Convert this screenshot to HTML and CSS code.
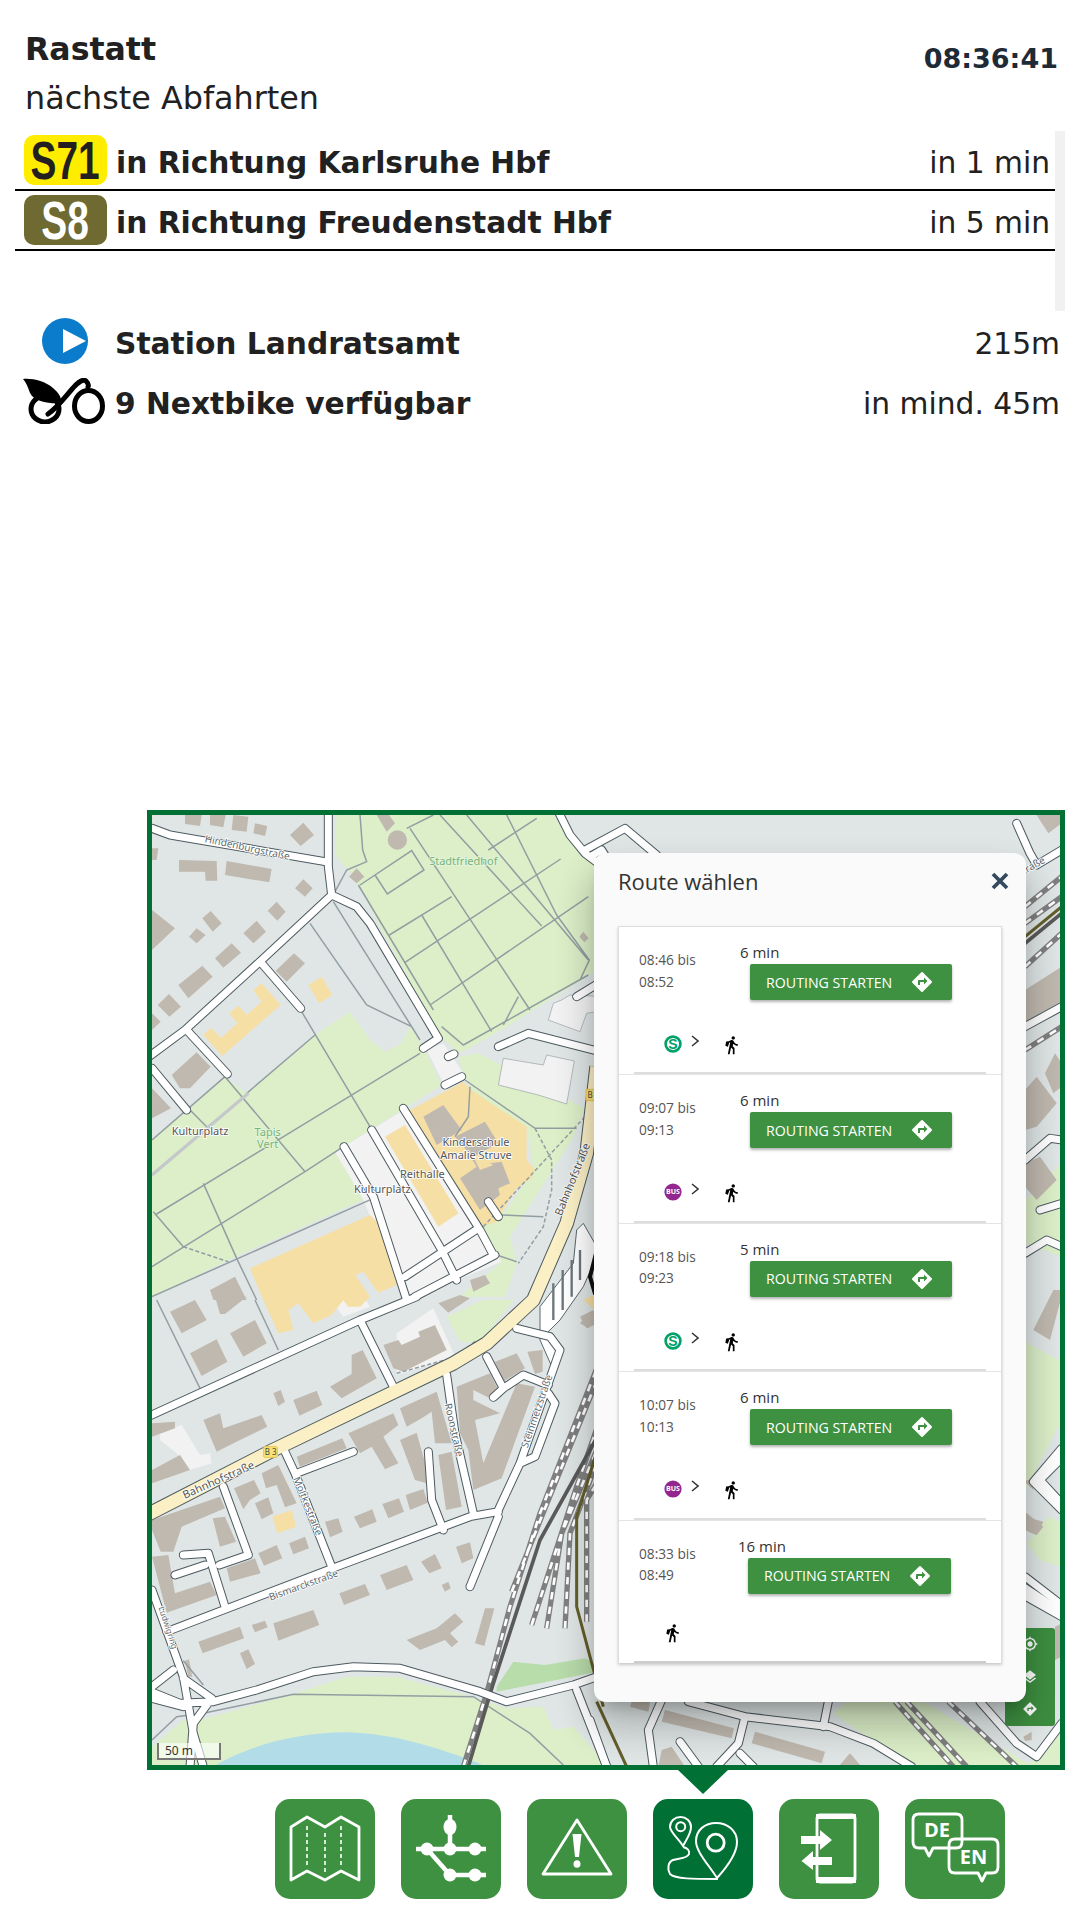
FILE: index.html
```html
<!DOCTYPE html>
<html lang="de">
<head>
<meta charset="utf-8">
<title>Rastatt</title>
<link rel="stylesheet" href="styles.css">
</head>
<body>
<svg class="sprites" aria-hidden="true">
  <symbol id="i-directions" viewBox="0 0 24 24"><path fill-rule="evenodd" d="M21.71 11.29l-9-9a.996.996 0 00-1.41 0l-9 9a.996.996 0 000 1.41l9 9c.39.39 1.02.39 1.41 0l9-9a.996.996 0 000-1.41zM14 14.5V12h-4v3H8v-4c0-.55.45-1 1-1h5V7.5l3.5 3.5-3.5 3.5z"/></symbol>
  <symbol id="i-walk" viewBox="0 0 24 24"><path d="M13.5 5.5c1.1 0 2-.9 2-2s-.9-2-2-2-2 .9-2 2 .9 2 2 2zM9.8 8.9L7 23h2.1l1.8-8 2.100 2v6h2v-7.5l-2.100-2 .6-3C14.800 12 16.800 13 19 13v-2c-1.900 0-3.500-1-4.300-2.400l-1-1.600c-.4-.6-1-1-1.700-1-.3 0-.5.1-.8.1L8 7.500 5 7.800 4 13l3 1 1.800-5z"/></symbol>
  <symbol id="i-chev" viewBox="0 0 8 12"><path d="M1 1l6 5-6 5" class="chev-line"/></symbol>
</svg>

<header class="head">
  <div>
    <h1 class="stop">Rastatt</h1>
    <p class="sub">nächste Abfahrten</p>
  </div>
  <div class="clock">08:36:41</div>
</header>

<section class="departures">
  <div class="dep">
    <span class="badge badge-s71"><span class="badge-txt">S71</span></span>
    <span class="dep-name">in Richtung Karlsruhe Hbf</span>
    <span class="dep-time">in 1 min</span>
  </div>
  <div class="dep">
    <span class="badge badge-s8"><span class="badge-txt">S8</span></span>
    <span class="dep-name">in Richtung Freudenstadt Hbf</span>
    <span class="dep-time">in 5 min</span>
  </div>
</section>

<section class="near">
  <div class="near-row">
    <svg class="near-ico" viewBox="0 0 84 46"><circle cx="42" cy="23" r="23" class="play-disc"/><path d="M40 11l23 12-23 12z" class="play-tri"/></svg>
    <span class="near-name">Station Landratsamt</span>
    <span class="near-val">215m</span>
  </div>
  <div class="near-row">
    <svg class="near-ico" viewBox="0 0 84 46">
      <ellipse cx="22" cy="31" rx="14" ry="13" class="bike-line"/>
      <path d="M25 36C34 30 42 19 50 10 55 4 60 1 63 3 65 5 66 7 65 9" class="bike-line"/>
      <ellipse cx="65.500" cy="28" rx="14" ry="15.500" class="bike-line"/>
      <path d="M0 1C9 0 22 3 30 10 36 15 39 20 38 25 27 26 15 24 9 18 5 13 6 8 0 1z" class="bike-fill"/>
    </svg>
    <span class="near-name">9 Nextbike verfügbar</span>
    <span class="near-val">in mind. 45m</span>
  </div>
</section>

<section class="map">
  <svg class="map-svg" viewBox="36 45 2724 2850" preserveAspectRatio="none">
    <defs>
      <g id="net">
        <path d="M36 85L90 105 555 185M565 30L565 200 575 285 365 480 135 690 20 775M575 285L650 320 690 370 895 715 850 745M365 490L482 625M140 690L262 822M36 805L140 930M925 770L942 762M915 855L965 830M612 1040L700 1190 800 1500M695 990L905 1350 950 1440M790 925L1020 1290 1060 1365M795 1430L1015 1285M825 1490L1065 1365M20 1852L660 1560 830 1490M1045 1205L1075 1250M1075 740L1165 700 1400 760M1310 590L1400 535M660 1560L760 1760"/>
        <g transform="translate(1200,15)"><path d="M45 0L90 90 135 145 175 175M135 135L255 70 350 150M150 155L185 135 210 175"/></g>
        <g transform="translate(0,1500)">
          <path d="M250 560L325 765 238 795M430 445L465 520 575 800M470 520L640 455M80 995L590 800 910 680 990 650 1075 635M255 920L205 760 130 765M105 825L195 795M920 225L945 400 1000 640M865 455L875 600 910 690M1075 630L1140 490 1185 470 1245 310 1225 280M1140 490L1260 150 1230 110 1130 85M1075 650L990 860M1040 170L1090 265 1060 292M1090 265L1150 225 1225 255M20 1170L120 1210 220 1205 350 1170 520 1115 640 1100 780 1105 1020 1175 1100 1205 1300 1155 1400 1120M36 870L130 1130 160 1300 190 1400M215 1195L160 1270 150 1400M130 1135L215 1195M36 1160L100 1110M36 1195L130 1220M1310 1170L1400 1400"/>
        </g>
        <g transform="translate(1350,2040)">
          <path d="M215 660L175 750 190 860M295 665L465 710 445 790 380 860M465 710L720 740 850 790 965 860M715 665L700 740M450 820L490 860M270 785L325 860M1170 665L1280 790 1340 830 1415 730M1300 320L1415 395M1300 345L1415 410M0 720L50 860"/>
        </g>
        <g transform="translate(2640,30)">
          <path d="M-10 40L30 130 50 165 125 120M15 650L125 590M15 1050L90 985 125 990M15 1330L80 1290 125 1310M60 1200L125 1180"/>
        </g>
        <g transform="translate(2640,1470)">
          <path d="M125 475L40 575 125 660M125 505L60 570 125 640M15 860L125 945"/>
        </g>
      </g>
      <g id="trunk">
        <path d="M20 2145L400 1950 940 1690 1040 1630 1180 1500 1280 1270 1340 1060 1370 800"/>
      </g>
    </defs>

    <rect x="36" y="45" width="2724" height="2850" class="m-bg"/>

    <g class="m-green">
      <path d="M590 45L1240 45 1300 140 1400 175 1400 490 1340 530 1100 680 960 760 905 715 730 400 655 255 625 210 585 165z"/>
      <path d="M36 1020L255 830 320 880 525 705 630 635 690 720 735 755 785 730 810 680 850 740 905 855 610 1040 585 1055 670 1200 330 1350 36 1490z"/>
      <path d="M955 770L1015 760 1335 925 1300 1010 1110 1310 1130 1390 1095 1490 960 1490 1080 1390 1020 1280 1100 1230 1180 1110 1160 980 1020 895 975 840z"/>
      <path d="M920 1550L1030 1500 1120 1500 1020 1630 960 1625z"/>
      <g transform="translate(0,1500)"><path d="M36 1395L36 1340 130 1260 180 1260 450 1185 620 1130 770 1130 1010 1195 1100 1225 1210 1220 1240 1290 1300 1280 1400 1395z"/></g>
      <g transform="translate(1350,2040)"><path d="M730 700L770 665 1000 665 1330 860 960 860zM1310 860L1415 745 1415 860zM1310 190L1370 115 1415 160 1415 260 1350 240z"/></g>
      <g transform="translate(2640,30)"><path d="M15 1170L125 1060 125 1340 15 1300z"/></g>
      <g transform="translate(2640,1470)"><path d="M15 155L125 215 125 390 15 600zM35 760L90 680 125 700 125 830z"/></g>
    </g>
    <path class="m-green-dark" transform="translate(0,1500)" d="M1070 1160L1120 1085 1215 1095 1335 1075 1400 1110 1070 1175z"/>

    <g class="m-light">
      <path d="M585 1055L800 925 1010 1290 1085 1385 830 1490 790 1490 670 1200zM860 750L910 730 970 820 910 850z"/>
      <path transform="translate(0,1500)" d="M770 100L880 25 945 170 770 225z"/>
      <path transform="translate(0,1500)" d="M60 400L125 375 180 465 210 460 215 490 150 510 110 460 60 420z"/>
      <path class="m-outline" d="M1225 660L1240 610 1265 600 1290 585 1400 590 1400 630 1340 640 1320 695zM1075 855L1090 775 1210 795 1220 765 1303 783 1280 912 1195 885z"/>
      <path d="M550 1470L640 1440 690 1520 610 1550z"/>
    </g>

    <g class="m-orange">
      <path d="M800 935L970 845 995 870 1030 895 1160 980 1160 1080 1185 1110 1175 1135 1130 1165 1090 1230 1075 1265 1010 1280z"/>
      <path d="M735 1010L795 975 955 1240 895 1280z"/>
      <path d="M505 555L545 530 577 585 537 610z"/>
      <path d="M190 705L213 683 243 713 292 670 268 640 295 617 320 645 365 605 340 570 365 550 422 615 247 768z"/>
      <path d="M330 1405L690 1245 715 1270 770 1455 715 1478 670 1415 645 1425 690 1490 660 1520 625 1520 610 1500 575 1545 520 1570 475 1510 445 1530 460 1590 415 1600 370 1500z"/>
      <path d="M397 2150L455 2130 468 2180 412 2200z"/>
      <path d="M610 1500L660 1500 625 1520z"/>
    </g>

    <g class="m-bldg">
      <path d="M135 45L185 45 180 78 135 72zM210 45L257 45 250 82 210 75zM280 45L325 50 320 95 275 90zM345 70L382 78 375 108 340 100zM450 105L490 68 522 105 482 138zM36 145L55 145 50 180 36 180zM117 180L230 183 232 242 197 242 195 215 117 215zM260 183L395 207 388 247 255 225zM465 265L490 238 518 265 495 290zM383 332L410 305 437 335 412 362zM36 330L105 385 36 450zM147 410L170 385 197 405 170 430zM187 355L212 333 245 370 218 395zM225 475L275 430 303 458 250 503zM310 400L350 362 378 395 340 430zM115 555L187 497 218 530 145 595zM53 615L87 582 123 620 88 650zM36 640L62 665 36 690zM407 512L462 460 495 490 440 545zM95 825L170 757 212 800 150 865 120 865zM36 865L93 925 36 955zM710 45L747 45 765 70 740 95zM627 230L650 205 673 230 650 250zM1318 410L1330 395 1346 415 1333 427z"/>
      <circle cx="772" cy="120" r="29"/>
      <path d="M850 950L910 915 965 990 890 1035zM945 1010L1035 965 1075 1030 1000 1070 1020 1110 1060 1095 1050 1090 1085 1085 1110 1150 1075 1165 1080 1185 1020 1230 960 1135 1010 1100 975 1045zM990 1440L1035 1425 1050 1450 1000 1475zM210 1470L285 1430 320 1500 220 1500z"/>
      <g transform="translate(0,1500)">
        <path d="M90 35L165 0 200 60 125 100zM225 -10L320 -10 255 42 240 42zM270 100L345 60 380 130 310 170zM150 160L230 118 262 185 185 228zM895 10L960 -15 990 -5 925 38zM730 135L775 120 785 135 840 110 835 95 885 75 920 150 790 215 760 205zM570 260L635 222 635 165 668 150 710 235 605 295zM400 280L422 270 435 305 415 318zM460 300L530 272 547 315 478 347zM190 360L240 340 250 385 365 345 382 380 300 420 230 455zM36 370L105 365 105 385 36 410zM36 510L120 465 150 510 36 550zM470 470L607 415 620 445 480 500zM625 400L760 340 775 375 730 410 775 490 735 508 695 440 660 460zM780 325L890 275 935 430 885 430 875 335 845 355 800 380zM780 420L830 398 850 470 865 515 860 550 825 540zM282 565L342 540 362 580 330 600 310 628zM365 520L415 495 470 610 435 622 410 555 378 565zM345 610L385 592 400 640 365 658zM895 465L935 455 965 620 918 630zM950 260L1050 220 1085 290 1060 300 1000 270 1000 300 1080 340 1005 360 1030 490 1130 250 1185 260 1085 535 1000 570 985 450 960 400zM1065 185L1130 160 1155 205 1090 245zM1162 155L1208 150 1208 215 1185 222zM218 655L255 650 288 725 240 740zM36 660L240 590 255 625 125 680 100 755 62 755 36 690zM355 760L410 735 427 775 372 797zM447 730L495 710 507 745 460 763zM555 665L595 655 608 695 570 712zM642 650L697 628 710 665 660 685zM727 612L777 595 792 635 745 655zM797 585L850 567 863 608 810 630zM260 805L345 775 362 820 270 845zM36 770L85 765 105 880 210 845 230 885 80 938zM948 740L990 727 1000 775 965 790zM843 785L885 762 905 805 868 820zM720 825L800 795 820 840 740 870zM598 880L675 852 690 885 612 915zM905 855L925 845 932 865 915 875zM1035 925L1063 925 1033 1038 1005 1030zM800 1020L890 985 945 940 970 965 930 1000 955 1025 935 1042 915 1020 840 1050zM400 970L520 930 538 975 415 1022zM335 975L375 962 383 982 345 997zM175 1025L300 980 312 1015 188 1060zM300 1060L325 1048 345 1092 320 1107zM135 1082L147 1078 157 1130 145 1130zM1320 50L1360 30 1375 70 1340 85z"/>
      </g>
      <g transform="translate(1350,2040)">
        <path d="M225 690L432 745 425 775 215 725zM495 755L705 815 695 850 485 790zM215 810L245 800 285 860 205 860zM745 860L780 820 815 860zM125 665L180 665 175 695 120 680zM1300 770L1325 755 1325 780 1305 783zM1305 110L1360 125 1340 165 1305 150zM1300 1L1330 1 1330 30z"/>
      </g>
      <g transform="translate(1200,1140)"><path d="M120 430L140 405 162 425 145 445z"/></g>
      <g transform="translate(2640,30)">
        <path d="M15 540L125 470 125 580 15 640zM15 840L50 800 110 880 50 950 15 960zM75 790L105 730 125 760 125 830 100 850zM15 1060L60 1040 110 1110 50 1170 15 1130zM40 0L125 0 125 40 85 70z"/>
      </g>
      <g transform="translate(2640,1470)">
        <path d="M40 120L100 0 130 0 90 150zM15 665L70 710 50 735 15 720zM105 1010L125 1000 125 1100 105 1110z"/>
      </g>
    </g>
    <path class="m-water" transform="translate(0,1500)" d="M220 1400C300 1350 450 1297 620 1297 780 1300 940 1360 1040 1400z"/>

    <g class="m-path">
      <path d="M660 45L668 150 680 185 620 210 585 275M660 255L815 152 852 210 742 282 705 225M800 85L880 45M748 405L935 290M795 487L1262 177M870 615L1345 290M1090 675L1135 590M905 680L970 735 1345 525M1045 150L1190 55M810 85L1170 630M900 45L1205 378M980 45L1345 480M1100 45L1250 345 1348 480 1320 540M845 345L1055 695M655 255L880 630M510 370L680 615 815 680M580 305L840 720M485 635L690 980M45 1245L840 760M36 1400L495 1115 610 1040M255 830L495 1115M190 1150L290 1375 350 1500M40 1235L130 1340M36 1490L700 1195M36 1020L255 830M150 930L200 980M525 705L320 880M975 840L1185 985 1310 985M990 860L985 950 945 1010M1085 1245L1210 1250M1070 1365L1130 1385"/>
      <g transform="translate(0,1500)"><path d="M50 0L180 265M345 0L415 150M460 1183L1000 1190 1170 1300 1270 1395M36 1320L110 1250 190 1240 460 1183M130 1082L190 1155"/></g>
      <path class="m-dash" d="M1185 985L1235 1080 1235 1170 1210 1280 1135 1390M1030 1280L1335 950M130 1340L265 1385M770 1720L950 1670 1010 1620"/>
    </g>
    <path class="m-pale" d="M36 1125L325 880"/>

    <g class="m-rail-base">
      <path transform="translate(0,1500)" d="M970 1400L1040 1180 1110 920 1200 640 1400 130M1115 875L1225 600 1400 170M1175 975L1310 560 1400 300M1220 985L1265 700 1400 380M1275 985L1290 700 1400 410M1340 965L1340 600 1400 500"/>
      <path transform="translate(1350,2040)" d="M915 665L1090 860M950 665L1130 860M1075 665L1280 860"/>
      <path transform="translate(2640,30)" d="M15 290L125 200M15 340L125 260M15 470L125 370M15 720L125 650"/>
    </g>
    <g class="m-rail-tie">
      <path transform="translate(0,1500)" d="M970 1400L1040 1180 1110 920 1200 640 1400 130M1115 875L1225 600 1400 170M1175 975L1310 560 1400 300M1220 985L1265 700 1400 380M1275 985L1290 700 1400 410M1340 965L1340 600 1400 500"/>
      <path transform="translate(1350,2040)" d="M915 665L1090 860M950 665L1130 860M1075 665L1280 860"/>
      <path transform="translate(2640,30)" d="M15 290L125 200M15 340L125 260M15 470L125 370M15 720L125 650"/>
    </g>
    <path class="m-rail-dark" transform="translate(0,1500)" d="M985 1400L1060 1150 1200 720 1400 360"/>
    <path class="m-rail-dark" transform="translate(2640,30)" d="M15 400L125 310"/>
    <path class="m-rail-olive" transform="translate(0,1500)" d="M1400 360L1310 650 1310 920 1390 1220"/>
    <path class="m-rail-olive" transform="translate(1350,2040)" d="M20 665L110 860"/>
    <path class="m-rail-olive" transform="translate(2640,30)" d="M15 380L125 290"/>

    <g transform="translate(1200,1140)">
      <path class="m-white" d="M0 380L100 250 110 150 130 130 170 200 170 230 130 320 60 420 20 460 70 510 40 570 0 480z"/>
      <path class="m-stripe" d="M40 310L40 420M68 270L68 390M95 240L95 350M120 210L120 300"/>
      <path class="m-ring" d="M172 205L150 290 172 365"/>
      <path class="m-orange" d="M130 360L170 340 170 395z"/>
    </g>

    <use href="#net" class="road-case"/>
    <use href="#trunk" class="trunk-case"/>
    <use href="#net" class="road-fill"/>
    <use href="#trunk" class="trunk-fill"/>

    <g class="lbl">
      <text transform="translate(320,153) rotate(12)" class="lbl-road">Hindenburgstraße</text>
      <text x="970" y="194" class="lbl-green">Stadtfriedhof</text>
      <text x="180" y="1004">Kulturplatz</text>
      <text x="383" y="1008" class="lbl-green">Tapis</text>
      <text x="383" y="1044" class="lbl-green">Vert</text>
      <text x="1008" y="1038">Kinderschule</text>
      <text x="1008" y="1076">Amalie Struve</text>
      <text x="847" y="1135">Reithalle</text>
      <text x="727" y="1179">Kulturplatz</text>
      <text transform="translate(1308,1142) rotate(-68)">Bahnhofstraße</text>
      <text transform="translate(240,2050) rotate(-24)">Bahnhofstraße</text>
      <text transform="translate(494,2122) rotate(68)" class="lbl-road">Moltkestraße</text>
      <text transform="translate(932,1892) rotate(77)" class="lbl-road">Roonstraße</text>
      <text transform="translate(1200,1837) rotate(-71)" class="lbl-road">Steinmetzstraße</text>
      <text transform="translate(494,2365) rotate(-20)" class="lbl-road">Bismarckstraße</text>
      <text transform="translate(76,2486) rotate(72)" class="lbl-road lbl-tight">Ludwigring</text>
      <text transform="translate(2685,205) rotate(-30)" class="lbl-road">traße</text>
    </g>
    <g transform="translate(0,1500)">
      <rect x="371" y="440" width="41" height="32" rx="3" class="shield"/>
      <text x="392" y="466" text-anchor="middle" class="shield-t">B 3</text>
    </g>
    <rect x="1338" y="868" width="40" height="34" rx="3" class="shield"/>
    <text x="1350" y="894" text-anchor="middle" class="shield-t">B</text>
  </svg>

  <div class="scale">50 m</div>

  <div class="ctrl">
    <button class="ctrl-btn"><svg class="ctrl-ico" viewBox="0 0 24 24"><path d="M12 8c-2.210 0-4 1.790-4 4s1.790 4 4 4 4-1.790 4-4-1.790-4-4-4zm8.940 3A8.994 8.994 0 0013 3.060V1h-2v2.060A8.994 8.994 0 003.060 11H1v2h2.060A8.994 8.994 0 0011 20.940V23h2v-2.060A8.994 8.994 0 0020.940 13H23v-2h-2.060zM12 19c-3.870 0-7-3.130-7-7s3.130-7 7-7 7 3.130 7 7-3.130 7-7 7z"/></svg></button>
    <button class="ctrl-btn"><svg class="ctrl-ico" viewBox="0 0 24 24"><path d="M11.990 18.540l-7.370-5.730L3 14.070l9 7 9-7-1.630-1.270-7.380 5.740zM12 16l7.360-5.730L21 9l-9-7-9 7 1.630 1.270L12 16z"/></svg></button>
    <button class="ctrl-btn"><svg class="ctrl-ico"><use href="#i-directions"/></svg></button>
  </div>

  <div class="dialog">
    <div class="dialog-head">
      <h2 class="dialog-title">Route wählen</h2>
      <svg class="dialog-close" viewBox="0 0 18 18"><path d="M2 2l14 14M16 2L2 16"/></svg>
    </div>
    <div class="routes">
      <article class="route">
        <div class="route-top">
          <div class="route-times">08:46 bis<br>08:52</div>
          <div class="route-main">
            <div class="route-dur">6 min</div>
            <button class="go"><span>ROUTING STARTEN</span><svg class="go-ico"><use href="#i-directions"/></svg></button>
          </div>
        </div>
        <div class="legs"><svg class="leg" viewBox="0 0 18 18"><circle cx="9" cy="9" r="7.400" class="s-ring"/><text x="9" y="13.600" text-anchor="middle" class="s-letter">S</text></svg><svg class="leg-chev"><use href="#i-chev"/></svg><svg class="leg-walk"><use href="#i-walk"/></svg></div>
        <div class="route-rule"></div>
      </article>
      <article class="route">
        <div class="route-top">
          <div class="route-times">09:07 bis<br>09:13</div>
          <div class="route-main">
            <div class="route-dur">6 min</div>
            <button class="go"><span>ROUTING STARTEN</span><svg class="go-ico"><use href="#i-directions"/></svg></button>
          </div>
        </div>
        <div class="legs"><svg class="leg" viewBox="0 0 18 18"><circle cx="9" cy="9" r="8.600" class="bus-disc"/><text x="9" y="11.400" text-anchor="middle" class="bus-letter">BUS</text></svg><svg class="leg-chev"><use href="#i-chev"/></svg><svg class="leg-walk"><use href="#i-walk"/></svg></div>
        <div class="route-rule"></div>
      </article>
      <article class="route">
        <div class="route-top">
          <div class="route-times">09:18 bis<br>09:23</div>
          <div class="route-main">
            <div class="route-dur">5 min</div>
            <button class="go"><span>ROUTING STARTEN</span><svg class="go-ico"><use href="#i-directions"/></svg></button>
          </div>
        </div>
        <div class="legs"><svg class="leg" viewBox="0 0 18 18"><circle cx="9" cy="9" r="7.400" class="s-ring"/><text x="9" y="13.600" text-anchor="middle" class="s-letter">S</text></svg><svg class="leg-chev"><use href="#i-chev"/></svg><svg class="leg-walk"><use href="#i-walk"/></svg></div>
        <div class="route-rule"></div>
      </article>
      <article class="route">
        <div class="route-top">
          <div class="route-times">10:07 bis<br>10:13</div>
          <div class="route-main">
            <div class="route-dur">6 min</div>
            <button class="go"><span>ROUTING STARTEN</span><svg class="go-ico"><use href="#i-directions"/></svg></button>
          </div>
        </div>
        <div class="legs"><svg class="leg" viewBox="0 0 18 18"><circle cx="9" cy="9" r="8.600" class="bus-disc"/><text x="9" y="11.400" text-anchor="middle" class="bus-letter">BUS</text></svg><svg class="leg-chev"><use href="#i-chev"/></svg><svg class="leg-walk"><use href="#i-walk"/></svg></div>
        <div class="route-rule"></div>
      </article>
      <article class="route route-last">
        <div class="route-top">
          <div class="route-times">08:33 bis<br>08:49</div>
          <div class="route-main">
            <div class="route-dur">16 min</div>
            <button class="go"><span>ROUTING STARTEN</span><svg class="go-ico"><use href="#i-directions"/></svg></button>
          </div>
        </div>
        <div class="legs"><svg class="leg-walk"><use href="#i-walk"/></svg></div>
        <div class="route-rule"></div>
      </article>
    </div>
  </div>
</section>

<div class="pointer"></div>

<nav class="nav">
  <a class="nav-btn"><svg class="nav-ico" viewBox="0 0 100 100">
    <path class="ni" d="M16 28L32 18 50 28 66 18 84 28 84 81 66 72 50 81 32 72 16 81z"/>
    <path class="ni-dash" d="M32 27V67M50 34V75M66 27V67"/>
  </svg></a>
  <a class="nav-btn"><svg class="nav-ico" viewBox="0 0 100 100">
    <path class="ni-net" d="M15 50H85M49 16V50M26 50L49 76H85"/>
    <ellipse cx="49" cy="28" rx="6.500" ry="8" class="ni-fill"/>
    <circle cx="26" cy="50" r="6.500" class="ni-fill"/><circle cx="49" cy="50" r="6.500" class="ni-fill"/><circle cx="74" cy="50" r="6.500" class="ni-fill"/>
    <circle cx="49" cy="76" r="6.500" class="ni-fill"/><circle cx="74" cy="76" r="6.500" class="ni-fill"/>
  </svg></a>
  <a class="nav-btn"><svg class="nav-ico" viewBox="0 0 100 100">
    <path class="ni" d="M50 21L84 75H16z"/>
    <path class="ni-fill" d="M45.500 35h9L52 58h-4z"/>
    <ellipse cx="50" cy="65" rx="3.500" ry="3.800" class="ni-fill"/>
  </svg></a>
  <a class="nav-btn nav-btn-active"><svg class="nav-ico" viewBox="0 0 100 100">
    <path class="ni-thin" d="M64 79C56 66 43 53 43 42 43 31 52 24 63 24 74 24 84 31 84 43 84 54 74 68 64 79z"/>
    <circle cx="62.700" cy="43.700" r="8.500" class="ni"/>
    <path class="ni-thin" d="M30 47C26 40 17 33 17 28 17 22 22 18 27.500 18 33 18 38 22 38 28 38 35 33 41 30 47z"/>
    <circle cx="27.700" cy="27.700" r="4.500" class="ni-thin"/>
    <path class="ni-thin" d="M30 48C34 49 37 51 36 55 34 60 25 59 20 61 15 63 14 70 17 75 22 80 40 80 65 80"/>
  </svg></a>
  <a class="nav-btn"><svg class="nav-ico" viewBox="0 0 100 100">
    <rect x="38" y="16" width="38" height="67" rx="3" class="ni"/>
    <path class="ni-fill" d="M37 15h40v5H37zM37 78h40v6H37z"/>
    <path class="ni-fill" d="M22 37H41V31L53 41 41 51V45H22z"/>
    <path class="ni-fill" d="M53 58H34V52L22.500 62 34 71V66H53z"/>
  </svg></a>
  <a class="nav-btn"><svg class="nav-ico" viewBox="0 0 100 100">
    <path class="ni" d="M14 15H51Q57 15 57 21V43Q57 49 51 49H28L24 57 20 49H14Q8 49 8 43V21Q8 15 14 15z"/>
    <path class="ni" d="M50 40H87Q93 40 93 46V68Q93 74 87 74H81L77 82 73 74H50Q44 74 44 68V46Q44 40 50 40z"/>
    <text x="32" y="38" text-anchor="middle" class="nav-lang">DE</text>
    <text x="68.500" y="65" text-anchor="middle" class="nav-lang">EN</text>
  </svg></a>
</nav>
</body>
</html>
```

FILE: styles.css
```css
* { box-sizing: border-box; }
html, body { margin: 0; padding: 0; }
body {
  width: 1080px;
  height: 1920px;
  overflow: hidden;
  background: #fff;
  color: #212121;
  font-family: "DejaVu Sans", "Liberation Sans", sans-serif;
  position: relative;
}
.sprites { position: absolute; width: 0; height: 0; }

/* header */
.head {
  display: flex;
  justify-content: space-between;
  align-items: flex-start;
  height: 131px;
  padding: 29px 22px 0 25px;
}
.stop { margin: 0; font-size: 31.600px; line-height: 40px; font-weight: 700; }
.sub { margin: 9px 0 0; font-size: 31.800px; line-height: 40px; font-weight: 400; }
.clock { margin-top: 15px; font-size: 27px; line-height: 30px; font-weight: 700; color: #1f2a37; }

/* departures */
.departures {
  width: 1065px;
  height: 180px;
  padding: 4px 0 0 15px;
  border-right: 10px solid #f1f1f1;
}
.dep {
  display: flex;
  align-items: center;
  box-sizing: content-box;
  height: 50px;
  padding: 0 5px 4px 9px;
  border-bottom: 2px solid #000;
}
.dep + .dep { padding-top: 4px; }
.badge {
  flex: none;
  display: flex;
  align-items: center;
  justify-content: center;
  width: 83px;
  height: 50px;
  margin-right: 9px;
  border-radius: 10px;
  font-family: "Liberation Sans", Arial, sans-serif;
  font-weight: 700;
  font-size: 54px;
  line-height: 50px;
}
.badge-txt { flex: none; display: block; transform: scaleX(.72); }
.badge-s71 { background: #ffed00; color: #231f20; }
.badge-s8 { background: #6e6a32; color: #fff; }
.dep-name { flex: 1; padding-top: 4px; font-size: 29.700px; font-weight: 700; }
.dep-time { padding-top: 4px; font-size: 29.700px; }

/* nearby */
.near { padding: 2px 20px 0 23px; }
.near-row { display: flex; align-items: center; height: 60px; }
.near-ico { flex: none; align-self: flex-start; width: 84px; height: 46px; margin: 4.500px 8px 0 0; }
.near-name { flex: 1; font-size: 29.700px; font-weight: 700; }
.near-val { font-size: 29.700px; }
.play-disc { fill: #0a7ccb; }
.play-tri { fill: #fff; }
.bike-fill { fill: #000; }
.bike-line { fill: none; stroke: #000; stroke-width: 5; stroke-linecap: round; }

/* map */
.map {
  position: absolute;
  left: 147px;
  top: 810px;
  width: 918px;
  height: 960px;
  border: 5px solid #017035;
  overflow: hidden;
}
.map-svg { display: block; width: 908px; height: 950px; }
.m-bg { fill: #e0e6e6; }
.m-green { fill: #dcefc8; }
.m-green-dark { fill: #b9dcab; }
.m-light { fill: #f2f2f2; }
.m-outline { stroke: #a8afb2; stroke-width: 2.500; }
.m-orange { fill: #f6dfa5; }
.m-bldg { fill: #c0b9b0; }
.m-water { fill: #b1dce8; }
.m-white { fill: #fff; stroke: #5a666c; stroke-width: 3; }
.m-stripe { fill: none; stroke: #6b767c; stroke-width: 7; }
.m-ring { fill: none; stroke: #111; stroke-width: 12; }
.m-path { fill: none; stroke: #939ea3; stroke-width: 4.500; }
.m-dash { stroke-dasharray: 12 7; }
.m-pale { fill: none; stroke: #c4c8ca; stroke-width: 10; }
.m-rail-base { fill: none; stroke: #808080; stroke-width: 16; }
.m-rail-tie { fill: none; stroke: #fff; stroke-width: 8; stroke-dasharray: 22 22; }
.m-rail-dark { fill: none; stroke: #5a5a5a; stroke-width: 11; }
.m-rail-olive { fill: none; stroke: #645f2c; stroke-width: 9; }
.road-case { fill: none; stroke: #4d5a60; stroke-width: 27; stroke-linecap: round; stroke-linejoin: round; }
.road-fill { fill: none; stroke: #fff; stroke-width: 21; stroke-linecap: round; stroke-linejoin: round; }
.trunk-case { fill: none; stroke: #4d5a60; stroke-width: 44; stroke-linejoin: round; }
.trunk-fill { fill: none; stroke: #fbf0c5; stroke-width: 38; stroke-linejoin: round; }
.lbl text {
  font-family: "Noto Sans", "Open Sans", sans-serif;
  font-size: 33px;
  text-anchor: middle;
  fill: #555;
  stroke: #fff;
  stroke-width: 5;
  paint-order: stroke;
}
.lbl .lbl-green { fill: #75b57a; stroke: #e8f4dc; }
.lbl .lbl-road { font-size: 30px; fill: #5d6a70; }
.lbl .lbl-tight { font-size: 25px; }
.shield { fill: #f7e27a; stroke: #e6c64c; stroke-width: 3; }
.shield-t { font-family: "Noto Sans", sans-serif; font-size: 24px; fill: #4a4a3a; }

.scale {
  position: absolute;
  left: 5px;
  bottom: 5px;
  width: 64px;
  height: 17px;
  padding-left: 6px;
  border: 2px solid #777;
  border-top: 0;
  background: rgba(255, 255, 255, .6);
  font: 12px/15px "Noto Sans", sans-serif;
  color: #333;
}

.ctrl {
  position: absolute;
  left: 853px;
  top: 813px;
  width: 50px;
  border-radius: 3px;
  overflow: hidden;
}
.ctrl-btn {
  display: flex;
  align-items: center;
  justify-content: center;
  width: 50px;
  height: 32.500px;
  padding: 0;
  border: 0;
  background: #3d8f40;
}
.ctrl-ico { width: 16px; height: 16px; fill: #fff; }

/* dialog */
.dialog {
  position: absolute;
  left: 442px;
  top: 38px;
  width: 432px;
  height: 849px;
  padding: 0 24px;
  border-radius: 12px;
  background: #fafafa;
  box-shadow: 0 11px 15px -7px rgba(0,0,0,.2), 0 24px 38px 3px rgba(0,0,0,.14), 0 20px 40px 0 rgba(0,0,0,.12);
  font-family: "Open Sans", "Noto Sans", sans-serif;
}
.dialog-head {
  display: flex;
  align-items: center;
  justify-content: space-between;
  height: 73px;
  padding: 0 0 17px 0;
}
.dialog-title { margin: 0; font-size: 22px; font-weight: 400; color: #333; }
.dialog-close { width: 18px; height: 18px; margin-right: -7px; }
.dialog-close path { fill: none; stroke: #34495e; stroke-width: 3.800; }
.routes {
  width: 384px;
  background: #fff;
  border: 1px solid #ddd;
  border-bottom: 0;
  box-shadow: 0 2px 3px rgba(0,0,0,.2);
}
.route {
  display: flex;
  flex-direction: column;
  height: 148.400px;
  border-bottom: 1px solid #e4e4e4;
  padding-top: 16px;
}
.route-last { height: 142.500px; border-bottom: 0; }
.route-top { display: flex; height: 57px; padding-left: 20px; }
.route-times { width: 101px; margin-top: 6px; font-size: 13.700px; line-height: 21.500px; color: #555; }
.route-dur { height: 21px; font-size: 15px; line-height: 18px; color: #333; }
.go {
  display: flex;
  align-items: center;
  width: 202px;
  height: 36px;
  margin-left: 10px;
  padding: 0 0 0 16px;
  border: 0;
  border-radius: 2px;
  background: #3d9140;
  box-shadow: 0 2px 3px rgba(0,0,0,.3);
  color: #fff;
  font: 500 14.200px "Open Sans", sans-serif;
  white-space: nowrap;
}
.go-ico { width: 24px; height: 24px; margin-left: 18px; fill: #fff; }
.legs { display: flex; align-items: flex-start; height: 17px; margin: 35px 0 0 45px; }
.leg { width: 18px; height: 18px; }
.leg-chev { width: 8px; height: 12px; margin: 0 0 0 9px; }
.leg-walk { width: 20px; height: 20px; margin-left: 23px; fill: #000; }
.route-last .leg-walk { margin-left: -1px; margin-top: -6px; }
.route-last .route-main { margin-left: -2px; }
.route-last .go { width: 203px; }
.route-rule { flex: none; height: 2px; margin: auto 15px 0; background: #ddd; }
.route-last .route-rule { background: #ccc; }
.s-ring { fill: #fff; stroke: #00a06a; stroke-width: 2.600; }
.s-letter { font: 700 14px "Liberation Sans", sans-serif; fill: #00a06a; }
.bus-disc { fill: #93278f; }
.bus-letter { font: 700 7px "Open Sans", sans-serif; fill: #fff; }
.chev-line { fill: none; stroke: #333; stroke-width: 1.500; }

/* bottom */
.pointer {
  position: absolute;
  left: 678px;
  top: 1770px;
  width: 0;
  height: 0;
  border-left: 25px solid transparent;
  border-right: 25px solid transparent;
  border-top: 24px solid #017035;
}
.nav {
  position: absolute;
  left: 275px;
  top: 1799px;
  display: flex;
  gap: 26px;
}
.nav-btn {
  display: block;
  width: 100px;
  height: 100px;
  border-radius: 15px;
  background: #3d9140;
}
.nav-btn-active { background: #017035; }
.nav-ico { display: block; width: 100px; height: 100px; }
.ni { fill: none; stroke: #fff; stroke-width: 2.800; stroke-linejoin: round; }
.ni-thin { fill: none; stroke: #fff; stroke-width: 2; stroke-linejoin: round; }
.ni-dash { fill: none; stroke: #fff; stroke-width: 1.600; stroke-dasharray: 4 3; }
.ni-net { fill: none; stroke: #fff; stroke-width: 4.500; }
.ni-fill { fill: #fff; }
.nav-lang { font: 700 20px "Open Sans", sans-serif; fill: #fff; }
```
